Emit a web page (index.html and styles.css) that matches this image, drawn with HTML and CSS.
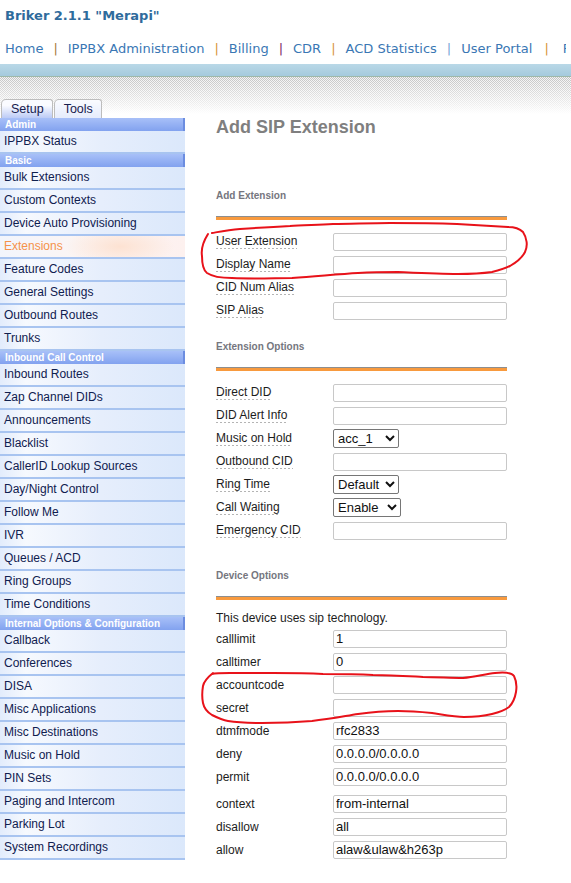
FILE: index.html
```html
<!DOCTYPE html>
<html lang="en">
<head>
    <meta charset="UTF-8">
    <title>Add SIP Extension - Briker</title>
    <link rel="stylesheet" href="styles.css">
</head>
<body>

    <div class="top">
        <h1 class="brand">Briker 2.1.1 "Merapi"</h1>
        <div class="nav">
            <a href="#">Home</a><span class="sep s1">|</span><a href="#">IPPBX Administration</a><span class="sep s2">|</span><a href="#">Billing</a><span class="sep s3">|</span><a href="#">CDR</a><span class="sep s2">|</span><a href="#">ACD Statistics</a><span class="sep s4">|</span><a href="#">User Portal</a><span class="sep s2 last">|</span><a href="#">FOP</a>
        </div>
    </div>
    <div class="band"></div>
    <div class="shade">
        <span class="tab active">Setup</span><span class="tab">Tools</span>
    </div>

    <div class="layout">
        <div class="menu">
            <div class="head">Admin</div>
            <a href="#">IPPBX Status</a>
            <div class="head">Basic</div>
            <a href="#">Bulk Extensions</a>
            <a href="#">Custom Contexts</a>
            <a href="#">Device Auto Provisioning</a>
            <a href="#" class="current">Extensions</a>
            <a href="#">Feature Codes</a>
            <a href="#">General Settings</a>
            <a href="#">Outbound Routes</a>
            <a href="#">Trunks</a>
            <div class="head">Inbound Call Control</div>
            <a href="#">Inbound Routes</a>
            <a href="#">Zap Channel DIDs</a>
            <a href="#">Announcements</a>
            <a href="#">Blacklist</a>
            <a href="#">CallerID Lookup Sources</a>
            <a href="#">Day/Night Control</a>
            <a href="#">Follow Me</a>
            <a href="#">IVR</a>
            <a href="#">Queues / ACD</a>
            <a href="#">Ring Groups</a>
            <a href="#">Time Conditions</a>
            <div class="head">Internal Options &amp; Configuration</div>
            <a href="#">Callback</a>
            <a href="#">Conferences</a>
            <a href="#">DISA</a>
            <a href="#">Misc Applications</a>
            <a href="#">Misc Destinations</a>
            <a href="#">Music on Hold</a>
            <a href="#">PIN Sets</a>
            <a href="#">Paging and Intercom</a>
            <a href="#">Parking Lot</a>
            <a href="#">System Recordings</a>
        </div>

        <div class="content">
            <h2 class="title">Add SIP Extension</h2>

            <h3 class="section first">Add Extension</h3>
            <div class="rule"></div>
            <div class="rows">
                <div class="row"><span class="lbl"><span class="tip">User Extension</span></span><input type="text"></div>
                <div class="row"><span class="lbl"><span class="tip">Display Name</span></span><input type="text"></div>
                <div class="row"><span class="lbl"><span class="tip">CID Num Alias</span></span><input type="text"></div>
                <div class="row"><span class="lbl"><span class="tip">SIP Alias</span></span><input type="text"></div>
            </div>

            <h3 class="section second">Extension Options</h3>
            <div class="rule"></div>
            <div class="rows">
                <div class="row"><span class="lbl"><span class="tip">Direct DID</span></span><input type="text"></div>
                <div class="row"><span class="lbl"><span class="tip">DID Alert Info</span></span><input type="text"></div>
                <div class="row"><span class="lbl"><span class="tip">Music on Hold</span></span><select class="w-moh"><option>acc_1</option></select></div>
                <div class="row"><span class="lbl"><span class="tip">Outbound CID</span></span><input type="text"></div>
                <div class="row"><span class="lbl"><span class="tip">Ring Time</span></span><select class="w-ring"><option>Default</option></select></div>
                <div class="row"><span class="lbl"><span class="tip">Call Waiting</span></span><select class="w-wait"><option>Enable</option></select></div>
                <div class="row"><span class="lbl"><span class="tip">Emergency CID</span></span><input type="text"></div>
            </div>

            <h3 class="section third">Device Options</h3>
            <div class="rule"></div>
            <p class="note">This device uses sip technology.</p>
            <div class="rows">
                <div class="row"><span class="lbl">calllimit</span><input type="text" value="1"></div>
                <div class="row"><span class="lbl">calltimer</span><input type="text" value="0"></div>
                <div class="row"><span class="lbl">accountcode</span><input type="text"></div>
                <div class="row"><span class="lbl">secret</span><input type="text"></div>
                <div class="row"><span class="lbl">dtmfmode</span><input type="text" value="rfc2833"></div>
                <div class="row"><span class="lbl">deny</span><input type="text" value="0.0.0.0/0.0.0.0"></div>
                <div class="row"><span class="lbl">permit</span><input type="text" value="0.0.0.0/0.0.0.0"></div>
            </div>
            <div class="rows gap">
                <div class="row"><span class="lbl">context</span><input type="text" value="from-internal"></div>
                <div class="row"><span class="lbl">disallow</span><input type="text" value="all"></div>
                <div class="row"><span class="lbl">allow</span><input type="text" value="alaw&amp;ulaw&amp;h263p"></div>
            </div>
        </div>
    </div>

    <!-- hand-drawn red marks over the screenshot -->
    <svg class="marks" width="571" height="883" viewBox="0 0 571 883">
        <path d="M208 234 C203 242 201 250 202 256 C202 264 203 270 207 273 C213 277 220 278 232 278 C255 279 275 278 292 278 C320 276 340 274 358 273 C375 272 388 272 398 272 C420 273 440 274 458 274 C475 274 485 273 492 272 C500 270 506 268 510 266 C517 262 522 258 525 252 C528 246 527 238 523 232 C519 228 514 227 508 227 C490 226 475 225 457 224 C430 223 410 223 390 223 C370 223 350 224 333 224 C315 225 300 225 290 226 C270 227 255 228 240 229 C228 230 218 232 212 233" />
        <path d="M213 673 C208 677 204 681 203 686 C202 692 202 698 203 703 C204 708 207 712 212 715 C218 718 222 720 228 721 C240 723 250 723 262 723 C285 723 300 722 312 721 C330 719 345 716 358 714 C372 712 386 711 398 711 C412 711 422 712 432 713 C445 715 455 717 464 717 C475 717 484 716 492 714 C500 712 505 710 509 707 C513 703 515 698 516 692 C517 686 516 680 514 676 C512 673 505 672 495 673 C485 674 475 677 463 678 C450 678 437 677 423 677 C405 676 390 675 373 675 C355 674 340 674 323 674 C305 673 290 673 273 673 C258 673 243 673 230 673 C222 673 216 673 212 674" />
    </svg>

</body>
</html>
```

FILE: styles.css
```css
:root {
    --link: #3a77b4;
    --menu-text: #10204f;
    --menu-sep: #a8c4f0;
    --label: #1c1c1c;
    --orange: #f89a3e;
}
body {
    margin: 0;
    background: #fff;
    font-family: "Liberation Sans", Arial, sans-serif;
    width: 571px;
    overflow: hidden;
}

/* header */
.top {
    padding: 8px 5px 0;
}
.brand {
    margin: 0;
    font: bold 13px/16px "DejaVu Sans", Verdana, sans-serif;
    color: #2f6b9c;
}
.nav {
    margin-top: 17px;
    font: 13px/16px "DejaVu Sans", Verdana, sans-serif;
    white-space: nowrap;
    overflow: hidden;
}
.nav a {
    color: var(--link);
    text-decoration: none;
}
.sep {
    display: inline-block;
    margin: 0 10px 0 10px;
}
.sep.last {
    margin: 0 14px 0 12px;
}
.s1 { color: #a8793c; }
.s2 { color: #d8933a; }
.s3 { color: #7c2a66; }
.s4 { color: #7aa6d6; }
.band {
    margin-top: 7px;
    height: 12px;
    background: linear-gradient(#b9d8e7, #a5cadd);
    border-bottom: 1px solid #9fb8a9;
}
.shade {
    height: 41px;
    display: flex;
    align-items: flex-end;
    gap: 1px;
    padding-left: 1px;
    background:
        linear-gradient(rgba(255, 255, 255, 0.1), #fff 37px),
        repeating-conic-gradient(#bdbdbd 0 25%, #f2f2f2 0 50%) 0 0 / 2px 2px;
}
.tab {
    height: 18px;
    line-height: 19px;
    padding: 0 8px 0 9px;
    border: 1px solid #bdbdbd;
    border-bottom: 0;
    border-radius: 5px 3px 0 0;
    font-size: 12.5px;
    color: #18204e;
    background: linear-gradient(#fafbff, #e6ecfc);
}
.tab.active {
    background: linear-gradient(#fafbff 30%, #bccbf6);
}

/* layout */
.layout {
    display: flex;
    align-items: flex-start;
}
.menu {
    width: 185px;
    flex-shrink: 0;
}
.menu .head {
    height: 13px;
    line-height: 13px;
    padding-left: 5px;
    font-size: 10px;
    font-weight: bold;
    color: #fff;
    background: linear-gradient(#a8c0f8, #82a2ef);
    box-shadow: inset -2px 0 #6c8de0;
    white-space: nowrap;
    overflow: hidden;
}
.menu a {
    display: block;
    height: 21px;
    line-height: 21px;
    padding-left: 4px;
    font-size: 12px;
    color: var(--menu-text);
    text-decoration: none;
    border-bottom: 2px solid var(--menu-sep);
    background: linear-gradient(to right, #e2ecfc, #f6f9fe 14%, #e6eefc 55%, #dbe8fb);
}
.menu a.current {
    color: #f5924a;
    background:
        radial-gradient(ellipse 55px 20px at 120px 50%, #fde2d2, rgba(253, 240, 236, 0) 100%),
        linear-gradient(to right, #f2f5fc, #fbf5f4 40%, #fdf1ef);
}

.content {
    margin-left: 31px;
    width: 291px;
}
.title {
    margin: 0;
    font-size: 18px;
    line-height: 18px;
    font-weight: bold;
    color: #7f7f7f;
}
.section {
    margin: 0;
    font-size: 10px;
    line-height: 13px;
    font-weight: bold;
    color: #75767e;
}
.section.first { margin-top: 53px; }
.section.second { margin-top: 18px; }
.section.third { margin-top: 27px; }
.rule {
    margin-top: 14px;
    height: 3px;
    border-top: 1px solid #8e8e8e;
    background: var(--orange);
}
.rows {
    margin-top: 10px;
}
.rows.gap {
    margin-top: 4px;
}
.note {
    margin: 10px 0 0;
    font-size: 12px;
    line-height: 17px;
    color: var(--label);
}
.note + .rows {
    margin-top: 0;
}
.row {
    height: 23px;
    display: flex;
    align-items: center;
}
.lbl {
    width: 117px;
    flex-shrink: 0;
    font-size: 12px;
    line-height: 14px;
    color: var(--label);
}
.tip {
    display: inline-block;
    padding-bottom: 1px;
    background: repeating-linear-gradient(to right, #b4b4b4 0 2px, transparent 2px 4px) left bottom / 100% 1px no-repeat;
}
input[type="text"] {
    width: 174px;
    height: 18px;
    box-sizing: border-box;
    margin: 0;
    padding: 0 2px;
    border: 1px solid #c8c8c8;
    border-radius: 2px;
    font: 13px "Liberation Sans", Arial, sans-serif;
    color: #111;
}
select {
    height: 19px;
    margin: 0;
    padding: 0;
    border: 1px solid #767676;
    border-radius: 2px;
    background: #fff;
    font: 13px "Liberation Sans", Arial, sans-serif;
    color: #111;
}
.w-moh { width: 66px; }
.w-ring { width: 66px; }
.w-wait { width: 68px; }

/* red annotation strokes */
.marks {
    position: absolute;
    top: 0;
    left: 0;
    pointer-events: none;
}
.marks path {
    fill: none;
    stroke: #e8121a;
    stroke-width: 2;
    stroke-linecap: round;
}
```
